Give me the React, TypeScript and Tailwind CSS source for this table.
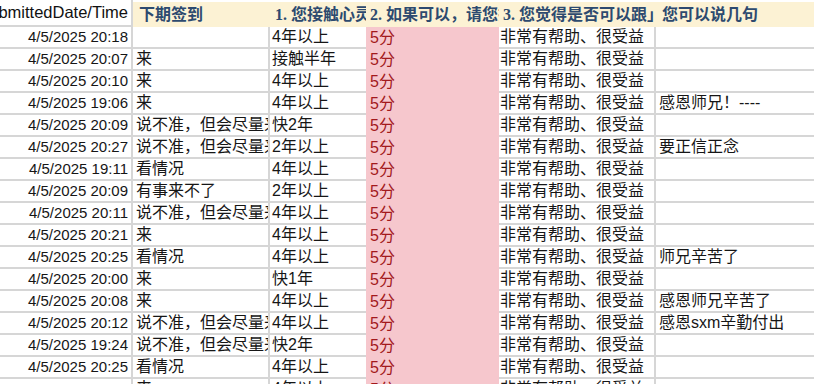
const rows: [string, string, string, string][] = [
  ["4/5/2025 20:18", "", "4年以上", ""],
  ["4/5/2025 20:07", "来", "接触半年", ""],
  ["4/5/2025 20:10", "来", "4年以上", ""],
  ["4/5/2025 19:06", "来", "4年以上", "感恩师兄！----"],
  ["4/5/2025 20:09", "说不准，但会尽量来", "快2年", ""],
  ["4/5/2025 20:27", "说不准，但会尽量来", "2年以上", "要正信正念"],
  ["4/5/2025 19:11", "看情况", "4年以上", ""],
  ["4/5/2025 20:09", "有事来不了", "2年以上", ""],
  ["4/5/2025 20:11", "说不准，但会尽量来", "4年以上", ""],
  ["4/5/2025 20:21", "来", "4年以上", ""],
  ["4/5/2025 20:25", "看情况", "4年以上", "师兄辛苦了"],
  ["4/5/2025 20:00", "来", "快1年", ""],
  ["4/5/2025 20:08", "来", "4年以上", "感恩师兄辛苦了"],
  ["4/5/2025 20:12", "说不准，但会尽量来", "4年以上", "感恩sxm辛勤付出"],
  ["4/5/2025 19:24", "说不准，但会尽量来", "快2年", ""],
  ["4/5/2025 20:25", "看情况", "4年以上", ""],
  ["", "来", "4年以上", ""],
];

const cellFont = { fontFamily: '"Liberation Sans", "Noto Sans CJK SC", sans-serif' };
const headFont = { fontFamily: '"Liberation Serif", "Noto Sans CJK SC", serif' };

function Header() {
  return (
    <div className="flex h-[27px] whitespace-nowrap">
      <div
        className="flex w-[133px] shrink-0 items-center justify-end overflow-hidden border-r-2 border-b-2 border-[#d6d6d6] bg-white pr-[3px] text-[16.5px] text-[#111]"
        style={cellFont}
      >
        SubmittedDate/Time
      </div>
      <div
        className="mt-[2px] flex flex-1 items-center bg-[#fcf2d4] text-[16px] font-bold text-[#2d4a6f]"
        style={headFont}
      >
        <div className="w-[137px] shrink-0 overflow-hidden pl-[6px]">下期签到</div>
        <div className="w-[96px] shrink-0 overflow-hidden pl-[5px]">1. 您接触心灵法门多久了</div>
        <div className="w-[133px] shrink-0 overflow-hidden pl-[4px]">2. 如果可以，请您打分</div>
        <div className="w-[156px] shrink-0 overflow-hidden pl-[4px]">3. 您觉得是否可以跟」</div>
        <div className="flex-1 overflow-hidden pl-[7px]">您可以说几句</div>
      </div>
    </div>
  );
}

function Row({ r }: { r: [string, string, string, string] }) {
  return (
    <div className="flex h-[22px] whitespace-nowrap text-[#161616]" style={cellFont}>
      <div className="flex w-[133px] shrink-0 items-center justify-end overflow-hidden border-r-2 border-b-2 border-[#d6d6d6] pr-[3px] text-[15px]">
        {r[0]}
      </div>
      <div className="flex w-[137px] shrink-0 items-center overflow-hidden border-r-2 border-b-2 border-[#d6d6d6] pl-[3px] text-[16px]">
        {r[1]}
      </div>
      <div className="flex w-[96px] shrink-0 items-center overflow-hidden border-b-2 border-[#d6d6d6] pl-[2px] text-[16px]">
        {r[2]}
      </div>
      <div className="flex w-[133px] shrink-0 items-center bg-[#f6c7cd] pl-[4px] text-[16px] text-[#a3191c]">
        5分
      </div>
      <div className="flex w-[157px] shrink-0 items-center overflow-hidden border-r-2 border-b-2 border-[#d6d6d6] pl-[1px] text-[16px]">
        非常有帮助、很受益
      </div>
      <div className="flex flex-1 items-center overflow-hidden border-b-2 border-[#d6d6d6] pl-[3px] text-[16px]">
        {r[3]}
      </div>
    </div>
  );
}

export default function App() {
  return (
    <div className="h-[384px] w-[814px] overflow-hidden bg-white">
      <Header />
      {rows.map((r, i) => (
        <Row key={i} r={r} />
      ))}
    </div>
  );
}
